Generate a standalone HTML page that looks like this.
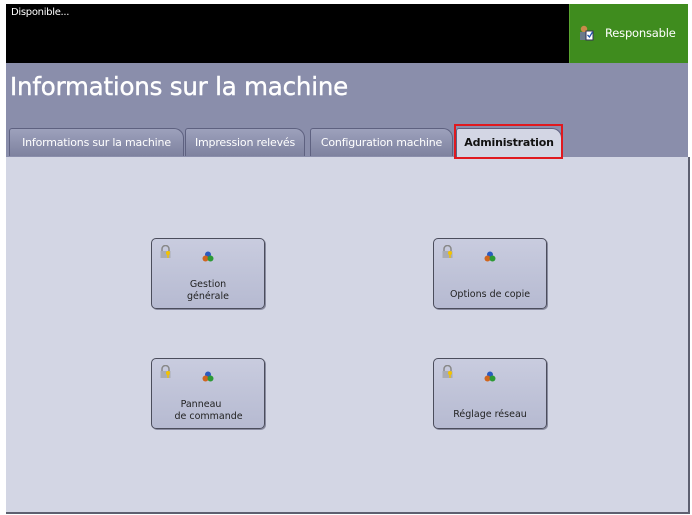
<!DOCTYPE html>
<html><head><meta charset="utf-8"><style>
*{margin:0;padding:0;box-sizing:border-box}
body{width:692px;height:515px;background:#fff;position:relative;overflow:hidden;font-family:"DejaVu Sans","Liberation Sans",sans-serif}
.abs{position:absolute}
#black{left:6px;top:4px;width:563px;height:59px;background:#000}
#green{left:569px;top:4px;width:119px;height:59px;background:#3f8c1e;border-left:1px solid #5aa530}
#head{left:6px;top:63px;width:682px;height:94px;background:#8a8eab}
#panel{left:6px;top:157px;width:684px;height:357px;background:#d3d6e4;border-right:2px solid #5d6070;border-bottom:2px solid #5d6070}
.tab{position:absolute;top:128px;height:28px;background:linear-gradient(#9da1bc,#7e829f);border:1px solid #5e6180;border-bottom:none;border-radius:3px 10px 0 0;color:#fff;font-size:11px;line-height:27px;text-align:center;letter-spacing:-0.2px}
.btn{position:absolute;width:114px;height:71px;background:linear-gradient(#c9ccdf,#b6bad1);border:1px solid #4b4d5c;border-radius:5px;box-shadow:1px 1px 0 #8a8ca0;font-size:9.5px;color:#222;text-align:center}
.lock{position:absolute;left:8px;top:6px;width:11px;height:13px}
.dots{position:absolute;left:50px;top:12px;width:12px;height:11px}
.lbl{position:absolute;left:0;right:0;line-height:12px}
</style></head><body>
<div class="abs" id="black"></div>
<div class="abs" style="left:11px;top:7px;color:#fff;font-size:10px;letter-spacing:-0.3px">Disponible...</div>
<div class="abs" id="green"></div>
<svg class="abs" style="left:579px;top:25px" width="15" height="16" viewBox="0 0 15 16"><circle cx="5" cy="4" r="3.2" fill="#c98a4a"/><rect x="1" y="7" width="8" height="8" fill="#6b7a8a"/><rect x="7" y="6" width="7" height="9" fill="#fff" stroke="#335" stroke-width="1"/><path d="M8.5 10l2 2 3-5" stroke="#2255aa" fill="none" stroke-width="1.3"/></svg>
<div class="abs" style="left:605px;top:26px;color:#fff;font-size:11.5px;letter-spacing:-0.2px">Responsable</div>
<div class="abs" id="head"></div>
<div class="abs" style="left:10px;top:72px;color:#fff;font-size:24.5px;letter-spacing:-0.2px;-webkit-text-stroke:0.4px #fff">Informations sur la machine</div>
<div class="abs" id="panel"></div>
<div class="tab" style="left:9px;width:175px">Informations sur la machine</div>
<div class="tab" style="left:185px;width:120px">Impression relevés</div>
<div class="tab" style="left:310px;width:143px">Configuration machine</div>
<div class="tab" style="left:456px;width:106px;height:30px;background:#d3d6e4;color:#111;font-weight:bold">Administration</div>
<div class="abs" style="left:454px;top:124px;width:109px;height:35px;border:2px solid #e0191f"></div>

<div class="btn" style="left:151px;top:238px"><svg class="lock" viewBox="0 0 11 13"><path d="M2 6V4a3.5 3.5 0 0 1 7 0v2" stroke="#888" stroke-width="1.5" fill="none"/><rect x="0.5" y="6" width="10" height="7" fill="#a9abb4"/><circle cx="8" cy="8" r="2" fill="#f2c200"/><rect x="7.3" y="8" width="1.4" height="5" fill="#f2c200"/></svg><svg class="dots" viewBox="0 0 12 11"><circle cx="6" cy="3.5" r="3" fill="#2a5bbf"/><circle cx="3.5" cy="7.5" r="3" fill="#d0651e"/><circle cx="8.5" cy="7.5" r="3" fill="#2d9a35"/></svg><div class="lbl" style="top:40px">Gestion<br>générale</div></div>
<div class="btn" style="left:433px;top:238px"><svg class="lock" viewBox="0 0 11 13"><path d="M2 6V4a3.5 3.5 0 0 1 7 0v2" stroke="#888" stroke-width="1.5" fill="none"/><rect x="0.5" y="6" width="10" height="7" fill="#a9abb4"/><circle cx="8" cy="8" r="2" fill="#f2c200"/><rect x="7.3" y="8" width="1.4" height="5" fill="#f2c200"/></svg><svg class="dots" viewBox="0 0 12 11"><circle cx="6" cy="3.5" r="3" fill="#2a5bbf"/><circle cx="3.5" cy="7.5" r="3" fill="#d0651e"/><circle cx="8.5" cy="7.5" r="3" fill="#2d9a35"/></svg><div class="lbl" style="top:50px">Options de copie</div></div>
<div class="btn" style="left:151px;top:358px"><svg class="lock" viewBox="0 0 11 13"><path d="M2 6V4a3.5 3.5 0 0 1 7 0v2" stroke="#888" stroke-width="1.5" fill="none"/><rect x="0.5" y="6" width="10" height="7" fill="#a9abb4"/><circle cx="8" cy="8" r="2" fill="#f2c200"/><rect x="7.3" y="8" width="1.4" height="5" fill="#f2c200"/></svg><svg class="dots" viewBox="0 0 12 11"><circle cx="6" cy="3.5" r="3" fill="#2a5bbf"/><circle cx="3.5" cy="7.5" r="3" fill="#d0651e"/><circle cx="8.5" cy="7.5" r="3" fill="#2d9a35"/></svg><div class="lbl" style="top:40px;left:-14px">Panneau<br>&nbsp;&nbsp;&nbsp;&nbsp;&nbsp;de commande</div></div>
<div class="btn" style="left:433px;top:358px"><svg class="lock" viewBox="0 0 11 13"><path d="M2 6V4a3.5 3.5 0 0 1 7 0v2" stroke="#888" stroke-width="1.5" fill="none"/><rect x="0.5" y="6" width="10" height="7" fill="#a9abb4"/><circle cx="8" cy="8" r="2" fill="#f2c200"/><rect x="7.3" y="8" width="1.4" height="5" fill="#f2c200"/></svg><svg class="dots" viewBox="0 0 12 11"><circle cx="6" cy="3.5" r="3" fill="#2a5bbf"/><circle cx="3.5" cy="7.5" r="3" fill="#d0651e"/><circle cx="8.5" cy="7.5" r="3" fill="#2d9a35"/></svg><div class="lbl" style="top:50px">Réglage réseau</div></div>
</body></html>
